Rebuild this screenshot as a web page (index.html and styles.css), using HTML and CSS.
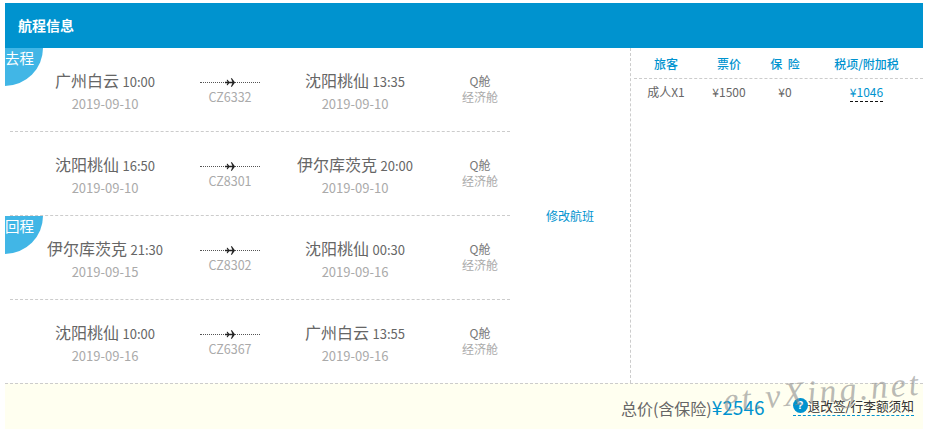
FILE: index.html
```html
<!DOCTYPE html>
<html lang="zh">
<head>
<meta charset="utf-8">
<title>航程信息</title>
<link rel="stylesheet" href="styles.css">
</head>
<body>
<svg class="sprite" width="0" height="0"><symbol id="plane" viewBox="0 0 12 10"><path d="M0 4.200h3.200L2.200 3V1.600h.9L5 4.200h3.800L7 0h1.300l3.100 4.200c.4.300.6.500.6.800s-.2.500-.6.800L8.300 10H7l1.800-4.200H5L3.100 8.400h-.9V7L3.200 5.800H0z"/></symbol></svg>
<main class="card">
  <header class="head">航程信息</header>
  <div class="body">
    <section class="legs">
      <div class="rows">
        <div class="leg">
          <span class="badge">去程</span>
          <div class="point"><div class="place">广州白云 <small>10:00</small></div><div class="date">2019-09-10</div></div>
          <div class="route"><div class="line"><svg class="plane"><use href="#plane"/></svg></div><div class="no">CZ6332</div></div>
          <div class="point"><div class="place">沈阳桃仙 <small>13:35</small></div><div class="date">2019-09-10</div></div>
          <div class="cabin"><div>Q舱</div><div class="type">经济舱</div></div>
        </div>
        <div class="leg">
          <div class="point"><div class="place">沈阳桃仙 <small>16:50</small></div><div class="date">2019-09-10</div></div>
          <div class="route"><div class="line"><svg class="plane"><use href="#plane"/></svg></div><div class="no">CZ8301</div></div>
          <div class="point"><div class="place">伊尔库茨克 <small>20:00</small></div><div class="date">2019-09-10</div></div>
          <div class="cabin"><div>Q舱</div><div class="type">经济舱</div></div>
        </div>
        <div class="leg">
          <span class="badge">回程</span>
          <div class="point"><div class="place">伊尔库茨克 <small>21:30</small></div><div class="date">2019-09-15</div></div>
          <div class="route"><div class="line"><svg class="plane"><use href="#plane"/></svg></div><div class="no">CZ8302</div></div>
          <div class="point"><div class="place">沈阳桃仙 <small>00:30</small></div><div class="date">2019-09-16</div></div>
          <div class="cabin"><div>Q舱</div><div class="type">经济舱</div></div>
        </div>
        <div class="leg">
          <div class="point"><div class="place">沈阳桃仙 <small>10:00</small></div><div class="date">2019-09-16</div></div>
          <div class="route"><div class="line"><svg class="plane"><use href="#plane"/></svg></div><div class="no">CZ6367</div></div>
          <div class="point"><div class="place">广州白云 <small>13:55</small></div><div class="date">2019-09-16</div></div>
          <div class="cabin"><div>Q舱</div><div class="type">经济舱</div></div>
        </div>
      </div>
      <a class="change">修改航班</a>
    </section>
    <aside class="price">
      <div class="grid titles"><span>旅客</span><span>票价</span><span>保&nbsp;&nbsp;险</span><span>税项/附加税</span></div>
      <div class="grid values"><span>成人X1</span><span>¥1500</span><span>¥0</span><span><a class="tax">¥1046</a></span></div>
    </aside>
  </div>
  <footer class="foot">
    <span class="total">总价(含保险)<b>¥2546</b></span>
    <a class="rules"><i>?</i>退改签/行李额须知</a>
    <span class="mark">et.vXing.net</span>
  </footer>
</main>
</body>
</html>
```

FILE: styles.css
```css
* { box-sizing: border-box; }
html, body { margin: 0; height: 429px; overflow: hidden; background: #fff; }
body { font-family: "Noto Sans CJK SC", "Noto Sans", sans-serif; color: #666; font-size: 12px; }
.sprite { position: absolute; }
.card { margin: 3px 11px 0 5px; display: flex; flex-direction: column; height: 426px; }
.head { height: 45px; background: #0093cf; color: #fff; font-size: 14px; font-weight: 700; line-height: 45px; padding-left: 13px; }
.body { display: flex; height: 335px; }
.legs { width: 626px; display: flex; border-right: 1px dashed #ccc; padding-left: 5px; }
.rows { width: 500px; }
.leg { position: relative; height: 84px; display: flex; border-bottom: 1px dashed #ccc; text-align: center; }
.leg:last-child { border-bottom: 0; }
.badge { position: absolute; left: -5px; top: 0; width: 38px; height: 38px; background: #41b6e6; color: #fff; border-radius: 0 0 38px 0; font-size: 14.500px; line-height: 19px; white-space: nowrap; text-align: left; }
.point { width: 190px; padding-top: 19px; }
.place { font-size: 16px; line-height: 26px; color: #666; }
.place small { font-size: 13px; }
.date { font-size: 13px; line-height: 18px; color: #aaa; }
.route { width: 60px; padding-top: 25px; }
.line { position: relative; height: 16px; }
.line::before { content: ""; position: absolute; left: 0; right: 0; top: 9px; border-top: 1px dotted #555; }
.plane { position: absolute; left: 25px; top: 5px; width: 10px; height: 9px; fill: #222; }
.no { font-size: 12.500px; line-height: 18px; color: #aaa; margin-top: -1px; }
.cabin { width: 60px; padding-top: 25px; font-size: 12px; line-height: 16px; color: #777; }
.type { color: #aaa; }
.change { margin: 159px 0 0 36px; font-size: 12px; line-height: 18px; color: #0093cf; white-space: nowrap; }
.price { flex: 1; padding: 6px 0 0 3px; }
.grid { display: grid; grid-template-columns: 64px 62px 50px 1fr; text-align: center; white-space: nowrap; }
.titles { height: 25px; line-height: 19px; color: #0093cf; font-weight: 500; border-bottom: 1px dashed #ccc; }
.values { padding-top: 4px; line-height: 18px; color: #666; }
.tax { color: #0093cf; border-bottom: 1px dashed #111; padding-bottom: 1px; }
.foot { position: relative; flex: 1; border-top: 1px dashed #ccc; background: #fffff0; display: flex; justify-content: flex-end; align-items: center; padding: 0 9px 1px 0; }
.total { font-size: 16px; color: #666; margin-right: 28px; }
.total b { font-weight: 400; font-size: 19px; color: #0093cf; }
.rules { position: relative; display: flex; align-items: center; color: #333; font-size: 12.700px; line-height: 18px; border-bottom: 1px dashed #0093cf; }
.rules i { width: 15px; height: 15px; border-radius: 50%; background: #0093cf; color: #fff; font: 700 11px/15px "Liberation Sans", sans-serif; text-align: center; }
.mark { position: absolute; left: 718px; top: -12px; font: italic 400 34px/40px "Liberation Serif", serif; letter-spacing: 3px; color: rgba(140, 140, 140, .6); transform: rotate(-5deg); white-space: nowrap; }
```
